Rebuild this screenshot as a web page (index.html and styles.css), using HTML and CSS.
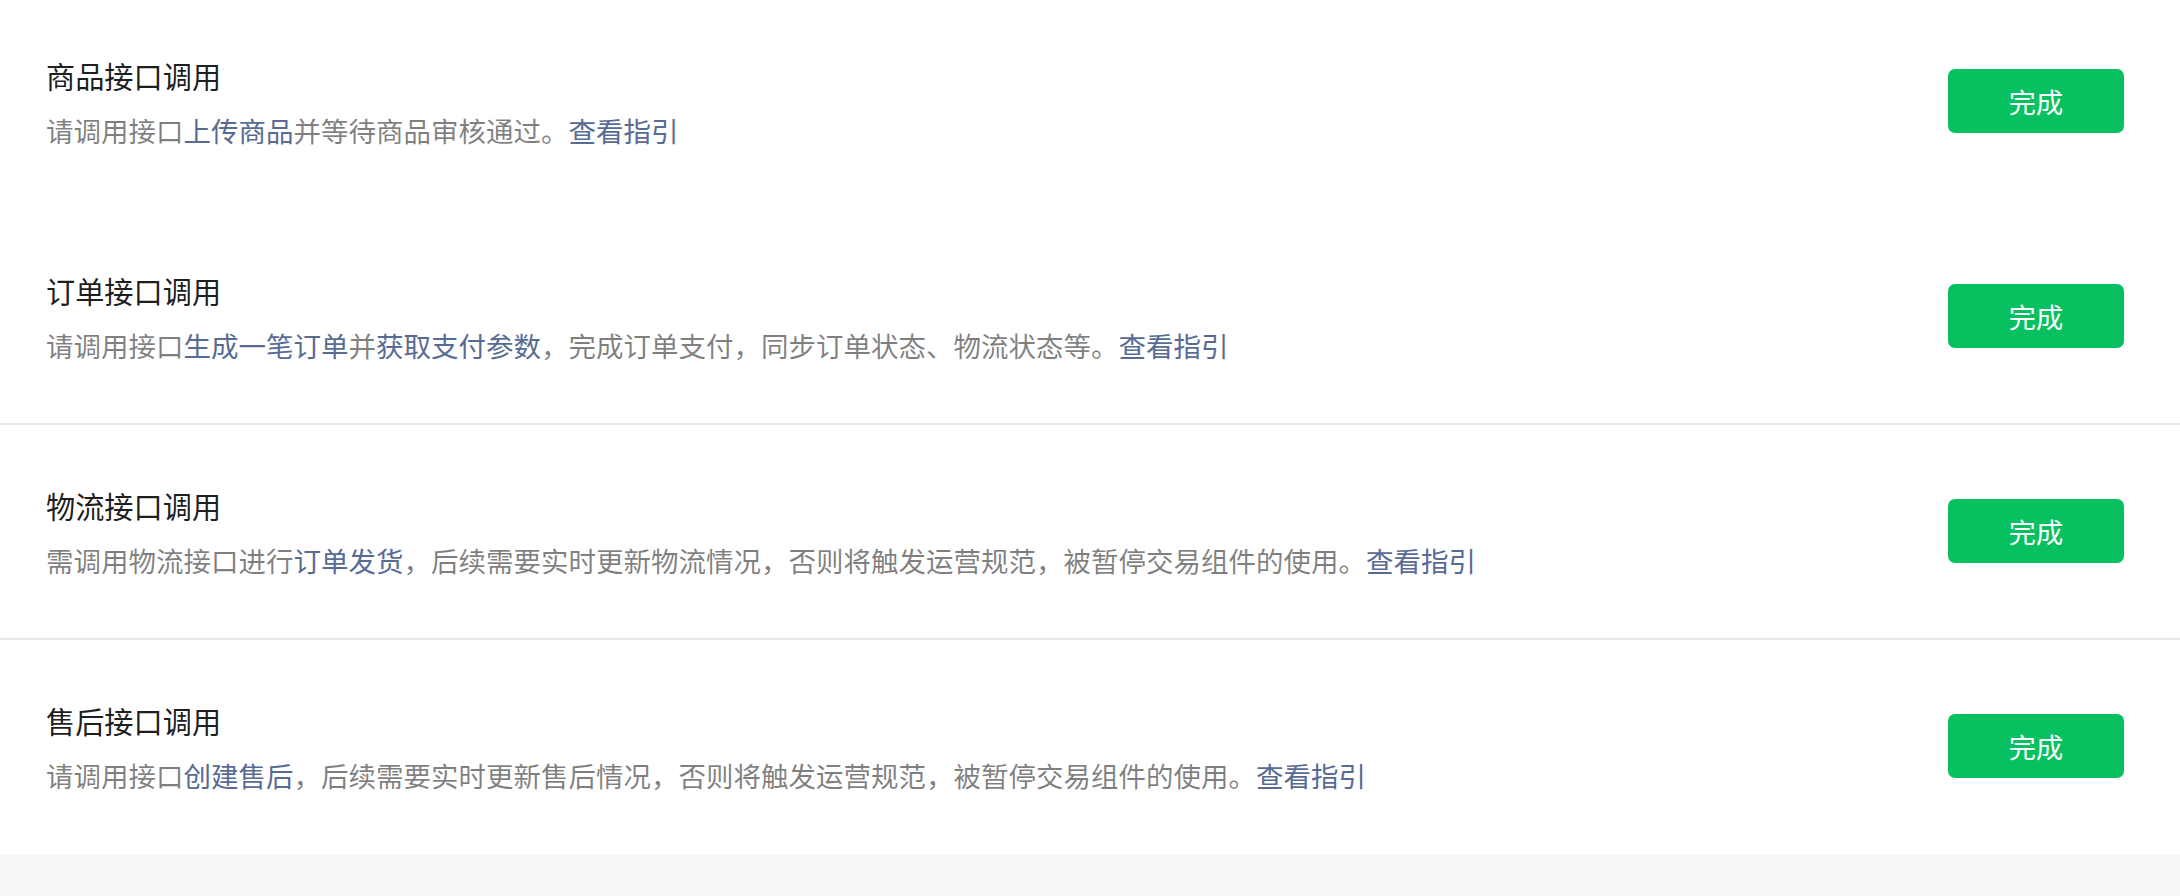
FILE: index.html
```html
<!DOCTYPE html>
<html lang="zh-CN">
<head>
    <meta charset="UTF-8">
    <meta name="viewport" content="width=device-width, initial-scale=1.0">
    <title>接口调用</title>
    <link rel="stylesheet" href="styles.css">
</head>
<body>
    <div class="task-list">
        <div class="task no-line">
            <div class="task-info">
                <h3 class="task-title">商品接口调用</h3>
                <p class="task-desc">请调用接口<a href="#">上传商品</a>并等待商品审核通过。<a href="#">查看指引</a></p>
            </div>
            <button class="btn-done">完成</button>
        </div>
        <div class="task">
            <div class="task-info">
                <h3 class="task-title">订单接口调用</h3>
                <p class="task-desc">请调用接口<a href="#">生成一笔订单</a>并<a href="#">获取支付参数</a>，完成订单支付，同步订单状态、物流状态等。<a href="#">查看指引</a></p>
            </div>
            <button class="btn-done">完成</button>
        </div>
        <div class="task">
            <div class="task-info">
                <h3 class="task-title">物流接口调用</h3>
                <p class="task-desc">需调用物流接口进行<a href="#">订单发货</a>，后续需要实时更新物流情况，否则将触发运营规范，被暂停交易组件的使用。<a href="#">查看指引</a></p>
            </div>
            <button class="btn-done">完成</button>
        </div>
        <div class="task no-line">
            <div class="task-info">
                <h3 class="task-title">售后接口调用</h3>
                <p class="task-desc">请调用接口<a href="#">创建售后</a>，后续需要实时更新售后情况，否则将触发运营规范，被暂停交易组件的使用。<a href="#">查看指引</a></p>
            </div>
            <button class="btn-done">完成</button>
        </div>
    </div>
</body>
</html>
```

FILE: styles.css
```css
body { margin: 0; background: #f7f8fa; font-family: "Noto Sans CJK SC", "Noto Sans", sans-serif; }
.task-list { background: #fff; margin-top: -5px; }
.task { display: flex; align-items: center; justify-content: space-between; padding: 60px 56px 58px 46px; border-bottom: 2px solid #e7e8eb; }
.task.no-line { border-bottom-color: #fff; }
.task-info { min-width: 0; }
.task-title { margin: 0; font-size: 29.2px; line-height: 40px; font-weight: normal; color: rgba(0, 0, 0, 0.9); }
.task-desc { margin: 15px 0 0; font-size: 27.5px; line-height: 40px; color: rgba(0, 0, 0, 0.5); }
.task-desc a { color: #576b95; text-decoration: none; }
.btn-done { width: 176px; height: 64px; margin-bottom: 4px; border: 0; border-radius: 7px; background: #07c160; color: #fff; font-family: inherit; font-size: 27.2px; cursor: pointer; flex-shrink: 0; }
```
